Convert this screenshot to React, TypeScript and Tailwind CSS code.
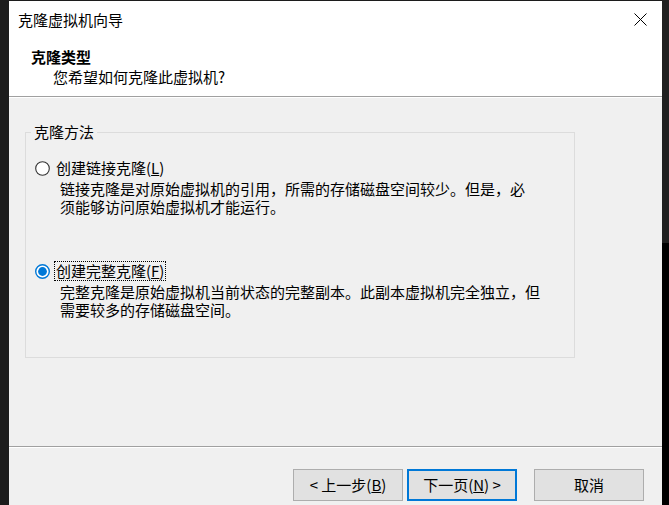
import React from "react";

const font = { fontFamily: '"Noto Sans CJK SC", "Noto Sans", sans-serif' };

function Radio({ checked }: { checked?: boolean }) {
  return (
    <svg width="15" height="15" viewBox="0 0 15 15" className="shrink-0">
      {checked ? (
        <>
          <circle cx="7.5" cy="7.5" r="6.8" fill="#ffffff" stroke="#0078d7" strokeWidth="1.4" />
          <circle cx="7.5" cy="7.5" r="4.4" fill="#0078d7" />
        </>
      ) : (
        <circle cx="7.5" cy="7.5" r="6.8" fill="#ffffff" stroke="#333333" strokeWidth="1.1" />
      )}
    </svg>
  );
}

function Btn({ children, focused }: { children: React.ReactNode; focused?: boolean }) {
  return (
    <button
      className={
        focused
          ? "w-[110px] h-[32px] bg-[#e1e1e1] border-2 border-[#0078d7] text-[15px] leading-[20px] text-black flex items-center justify-center"
          : "w-[110px] h-[32px] bg-[#e1e1e1] border border-[#adadad] text-[15px] leading-[20px] text-black flex items-center justify-center"
      }
    >
      {children}
    </button>
  );
}

export default function App() {
  return (
    <div className="w-[669px] h-[505px] bg-[#1c1c1c] flex text-black overflow-hidden" style={font}>
      <div className="w-[9px] shrink-0" />
      <div className="w-[653px] shrink-0 flex flex-col pt-[1px]">
        {/* Header */}
        <div className="h-[95px] bg-white flex flex-col pt-[9px]">
          <div className="flex items-center justify-between pl-[9px] pr-[15px] h-[20px]">
            <span className="text-[15px] leading-[20px]">克隆虚拟机向导</span>
            <svg width="13" height="13" viewBox="0 0 13 13" className="-mt-[2px]">
              <path d="M0.5 0.5 L12.5 12.5 M12.5 0.5 L0.5 12.5" stroke="#000" strokeWidth="1" />
            </svg>
          </div>
          <div className="mt-[17px] pl-[22px] text-[15px] leading-[20px] font-bold">克隆类型</div>
          <div className="pl-[44px] text-[15px] leading-[20px]">您希望如何克隆此虚拟机?</div>
        </div>
        <div className="h-[1px] bg-[#a0a0a0]" />
        <div className="h-[1px] bg-white" />
        {/* Body */}
        <div className="flex-1 bg-[#f0f0f0] flex flex-col">
          <div className="h-[348px] pt-[24px] pl-[16px]">
            <fieldset className="w-[550px] h-[236px] border border-[#dcdcdc] m-0 p-0 pl-[9px]">
              <legend className="ml-[-4px] px-[3px] text-[15px] leading-[20px]">克隆方法</legend>
              <div className="mt-[16px] flex items-center h-[20px]">
                <Radio />
                <span className="ml-[4px] px-[1px] border border-transparent text-[15px] leading-[18px]">
                  创建链接克隆(<span className="underline">L</span>)
                </span>
              </div>
              <div className="mt-[2px] ml-[25px] text-[15px] leading-[18px]">
                <div className="h-[18px] whitespace-nowrap">
                  链接克隆是对原始虚拟机的引用，所需的存储磁盘空间较少。但是，必
                </div>
                <div className="h-[18px] whitespace-nowrap">须能够访问原始虚拟机才能运行。</div>
              </div>
              <div className="mt-[45px] flex items-center h-[20px]">
                <Radio checked />
                <span className="ml-[4px] px-[1px] border border-dotted border-black text-[15px] leading-[18px]">
                  创建完整克隆(<span className="underline">F</span>)
                </span>
              </div>
              <div className="mt-[2px] ml-[25px] text-[15px] leading-[18px]">
                <div className="h-[18px] whitespace-nowrap">
                  完整克隆是原始虚拟机当前状态的完整副本。此副本虚拟机完全独立，但
                </div>
                <div className="h-[18px] whitespace-nowrap">需要较多的存储磁盘空间。</div>
              </div>
            </fieldset>
          </div>
          <div className="h-[1px] bg-[#a0a0a0]" />
          <div className="h-[1px] bg-white" />
          <div className="flex-1 flex items-start pt-[21px] pl-[284px]">
            <Btn>
              &lt; 上一步(<span className="underline">B</span>)
            </Btn>
            <div className="w-[4px]" />
            <Btn focused>
              下一页(<span className="underline">N</span>) &gt;
            </Btn>
            <div className="w-[17px]" />
            <Btn>取消</Btn>
          </div>
        </div>
      </div>
      <div className="flex-1 flex flex-col">
        <div className="h-[243px] bg-[#202020]" />
        <div className="flex-1 bg-black" />
      </div>
    </div>
  );
}
